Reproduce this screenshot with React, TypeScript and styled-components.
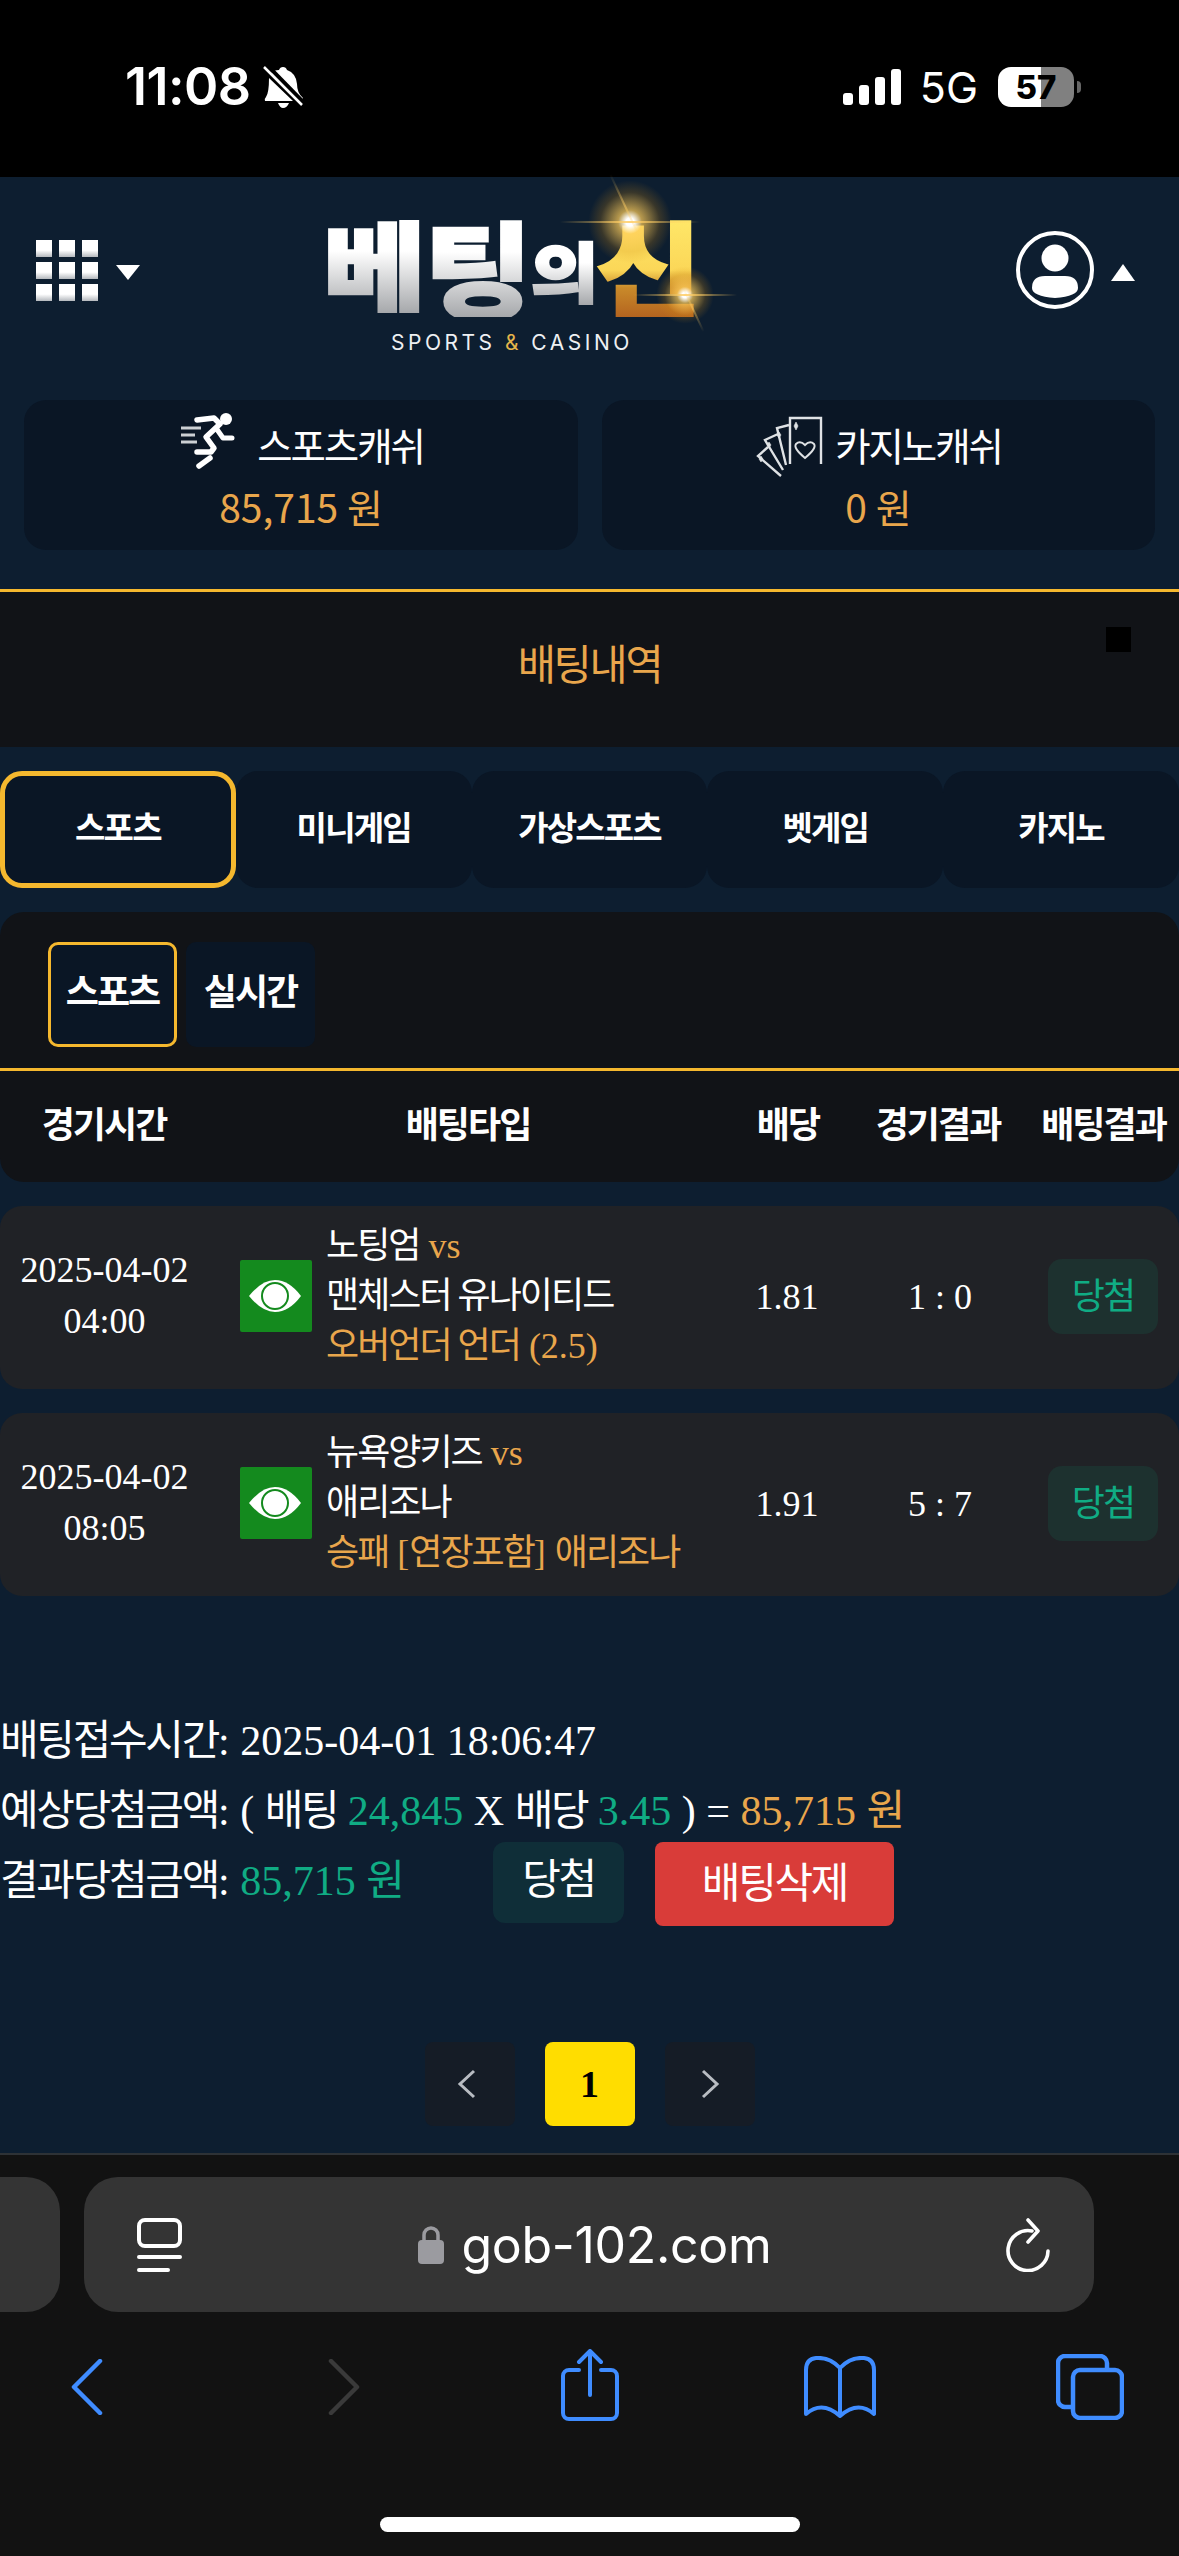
import React from "react";
import styled, { createGlobalStyle } from "styled-components";

const SERIF = `"Liberation Serif", "Noto Sans CJK KR", serif`;
const SANS = `"Noto Sans CJK KR", "Noto Sans", sans-serif`;
const GOLD = "#f5b82e";
const ORANGE = "#e9a64c";
const TEAL = "#10ac84";

const Global = createGlobalStyle`
  html, body { margin: 0; padding: 0; background: #0d1e30; }
  * { box-sizing: border-box; }
  #root { width: 1179px; height: 2556px; overflow: hidden; }
`;

const Page = styled.div`
  width: 1179px;
  height: 2556px;
  display: flex;
  flex-direction: column;
  background: #0d1e30;
  font-family: ${SERIF};
  color: #fff;
  overflow: hidden;
`;

/* Hangul set tighter than the Latin beside it, as in the reference's system font */
const K = styled.span`
  letter-spacing: -0.055em;
`;

const StatusBar = styled.div`
  height: 177px;
  background: #000;
  display: flex;
  justify-content: space-between;
  align-items: flex-start;
  padding: 60px 105px 0 125px;
  font-family: Inter, sans-serif;
`;
const StatusLeft = styled.div`
  display: flex;
  align-items: center;
  gap: 12px;
`;
const Clock = styled.span`
  font-size: 52px;
  line-height: 54px;
  font-weight: 600;
  letter-spacing: -0.5px;
`;
const StatusRight = styled.div`
  display: flex;
  align-items: center;
  gap: 20px;
  height: 54px;
`;
const NetLabel = styled.span`
  font-size: 43px;
  font-weight: 400;
  line-height: 54px;
  margin-left: -1px;
`;
const Battery = styled.div`
  position: relative;
  width: 76px;
  height: 40px;
  border-radius: 13px;
  background: linear-gradient(90deg, #fff 0 57%, #808080 57% 100%);
  display: flex;
  align-items: center;
  justify-content: center;
  font-size: 33px;
  font-weight: 800;
  color: #000;
  &::after {
    content: "";
    position: absolute;
    right: -7px;
    top: 14px;
    width: 4px;
    height: 12px;
    border-radius: 0 4px 4px 0;
    background: #666;
  }
`;

const Header = styled.header`
  height: 223px;
  display: grid;
  grid-template-columns: 291px 1fr auto;
  padding: 0 44px 0 36px;
`;
const MenuBlock = styled.div`
  display: flex;
  align-items: center;
  gap: 18px;
  height: 60px;
  margin-top: 63px;
  align-self: start;
`;
const UserBlock = styled(MenuBlock)`
  gap: 17px;
  height: 80px;
  margin-top: 53px;
`;
const Caret = styled.span<{ $up?: boolean }>`
  width: 0;
  height: 0;
  border-left: 12px solid transparent;
  border-right: 12px solid transparent;
  ${(p) =>
    p.$up ? "border-bottom: 17px solid #fff; margin-top: 4px;" : "border-top: 15px solid #fff; margin-top: 5px;"}
`;
const Tile = styled.div`
  display: grid;
  grid-template-columns: repeat(3, 16px);
  grid-auto-rows: 17px;
  gap: 5px 7px;
`;
const TileDot = styled.i`
  display: block;
  background: linear-gradient(#fff 60%, #b4b8bd);
`;
const LogoBlock = styled.div`
  position: relative;
  width: 373px;
  margin-top: 40px;
  align-self: start;
`;
const WordMark = styled.div`
  display: flex;
  align-items: flex-start;
  height: 113px;
  margin-left: -4px;
  font-family: ${SANS};
  font-weight: 900;
  line-height: 1;
`;
const GlyphSlot = styled.div<{ $w: number }>`
  flex: none;
  width: ${(p) => p.$w}px;
`;
const Glyph = styled.span<{ $size: number; $sx: number; $top: number; $gold?: boolean }>`
  display: block;
  width: ${(p) => p.$size * 0.9}px;
  font-size: ${(p) => p.$size}px;
  letter-spacing: -0.1em;
  margin-top: ${(p) => p.$top}px;
  transform: scaleX(${(p) => p.$sx});
  transform-origin: left top;
  white-space: nowrap;
  -webkit-text-fill-color: transparent;
  -webkit-text-stroke: 2.5px transparent;
  background: ${(p) =>
    p.$gold
      ? "linear-gradient(#ffe96a 0%, #fbd758 55%, #c98a2a 72%, #b4641f 100%)"
      : "linear-gradient(#fff 0%, #fff 38%, #a6a8ab 100%)"};
  -webkit-background-clip: text;
  background-clip: text;
`;
const Glow = styled.i<{ $x: number; $y: number; $s: number }>`
  position: absolute;
  left: ${(p) => p.$x - p.$s / 2}px;
  top: ${(p) => p.$y - p.$s / 2}px;
  width: ${(p) => p.$s}px;
  height: ${(p) => p.$s}px;
  border-radius: 50%;
  background: radial-gradient(circle, #fff 0 7%, rgba(255, 205, 90, 0.7) 20%, rgba(210, 140, 20, 0.22) 50%, transparent 70%);
`;
const Streak = styled.i<{ $x: number; $y: number; $w: number; $rot?: number }>`
  position: absolute;
  left: ${(p) => p.$x - p.$w / 2}px;
  top: ${(p) => p.$y - 1}px;
  width: ${(p) => p.$w}px;
  height: 2px;
  transform: rotate(${(p) => p.$rot ?? 0}deg);
  background: linear-gradient(90deg, transparent, rgba(255, 205, 100, ${(p) => (p.$rot ? 0.5 : 0.85)}), transparent);
`;
const Tagline = styled.div`
  width: 240px;
  margin: 1px 0 0 64px;
  font-family: Inter, sans-serif;
  font-size: 21px;
  line-height: 24px;
  letter-spacing: 3.5px;
  white-space: nowrap;
  color: #eef0f3;
  span { color: #e3b44a; }
`;

const CashRow = styled.div`
  display: grid;
  grid-template-columns: 554px 553px;
  gap: 24px;
  padding: 0 24px;
  height: 150px;
`;
const CashCard = styled.div`
  background: #0a1625;
  border-radius: 22px;
  display: flex;
  flex-direction: column;
  align-items: center;
  padding-top: 14px;
`;
const CashLabel = styled.div`
  display: flex;
  align-items: center;
  gap: 4px;
  height: 60px;
  font-family: ${SANS};
  font-size: 38.5px;
  font-weight: 400;
  letter-spacing: -0.055em;
`;
const CashValue = styled.div`
  font-family: ${SANS};
  font-size: 39px;
  line-height: 46px;
  margin-top: 9px;
  color: ${ORANGE};
  font-weight: 400;
`;

const TitleBand = styled.div`
  position: relative;
  margin-top: 39px;
  border-top: 3px solid ${GOLD};
  height: 158px;
  background: #111317;
  display: flex;
  justify-content: center;
  padding-top: 44px;
  font-family: ${SANS};
  font-size: 41.5px;
  letter-spacing: -0.055em;
  line-height: 52px;
  color: ${ORANGE};
`;
const BlackSquare = styled.i`
  position: absolute;
  left: 1106px;
  top: 35px;
  width: 25px;
  height: 25px;
  background: #000;
`;

const Tabs = styled.div`
  display: grid;
  grid-template-columns: repeat(5, 1fr);
  margin-top: 24px;
  height: 117px;
`;
const Tab = styled.div<{ $active?: boolean }>`
  background: #0a1625;
  border-radius: 22px;
  border: ${(p) => (p.$active ? `5px solid ${GOLD}` : "5px solid transparent")};
  text-align: center;
  padding-top: 28px;
  font-family: ${SANS};
  font-size: 33px;
  letter-spacing: -0.055em;
  line-height: 44px;
  font-weight: 700;
`;

const Panel = styled.section`
  margin-top: 24px;
  height: 270px;
  background: #111317;
  border-radius: 24px;
  display: flex;
  flex-direction: column;
`;
const SubTabs = styled.div`
  display: flex;
  gap: 9px;
  padding: 30px 48px 21px;
  border-bottom: 3px solid ${GOLD};
  height: 159px;
`;
const SubTab = styled.div<{ $active?: boolean }>`
  width: 129px;
  height: 105px;
  border-radius: 10px;
  background: #0a1625;
  border: ${(p) => (p.$active ? `3px solid ${GOLD}` : "3px solid transparent")};
  text-align: center;
  padding-top: 21px;
  font-family: ${SANS};
  font-size: 36px;
  letter-spacing: -0.055em;
  line-height: 46px;
  font-weight: 700;
`;
const HeadRow = styled.div`
  display: grid;
  grid-template-columns: 208px 520px 120px 180px 151px;
  padding-top: 27px;
  text-align: center;
  font-family: ${SANS};
  font-size: 36px;
  letter-spacing: -0.055em;
  line-height: 48px;
  font-weight: 700;
`;

const BetList = styled.div`
  display: flex;
  flex-direction: column;
  gap: 24px;
  margin-top: 24px;
`;
const BetRow = styled.div`
  height: 183px;
  background: #202226;
  border-radius: 22px;
  display: grid;
  grid-template-columns: 240px 86px 395px 130px 176px 131px;
  align-items: center;
  font-size: 36px;
`;
const DateCell = styled.div`
  width: 209px;
  text-align: center;
  line-height: 51px;
  margin-top: -4px;
`;
const TeamCell = styled.div`
  display: flex;
  flex-direction: column;
  line-height: 50px;
  white-space: nowrap;
  margin-top: -3px;
`;
const Vs = styled.span`
  color: ${ORANGE};
`;
const Pick = styled.div`
  color: ${ORANGE};
`;
const CenterCell = styled.div`
  text-align: center;
  padding-left: 2px;
  margin-top: -2px;
`;
const Badge = styled.div`
  height: 75px;
  width: 110px;
  margin: -3px 0 0 21px;
  border-radius: 14px;
  background: #1d312f;
  color: ${TEAL};
  font-family: ${SANS};
  font-size: 36px;
  letter-spacing: -0.055em;
  line-height: 68px;
  text-align: center;
`;

const Info = styled.div`
  margin-top: 110px;
  font-size: 42px;
  line-height: 70px;
  white-space: nowrap;
`;
const InfoLine = styled.div`
  height: 70px;
`;
const Green = styled.span`
  color: ${TEAL};
`;
const Orange = styled.span`
  color: ${ORANGE};
`;
const ResultLine = styled.div`
  display: flex;
  align-items: flex-start;
  height: 84px;
  margin-top: -4px;
`;
const ResultText = styled.div`
  width: 493px;
  line-height: 78px;
`;
const StatusButton = styled.div`
  width: 131px;
  height: 81px;
  border-radius: 12px;
  background: #0f2e38;
  text-align: center;
  font-family: ${SANS};
  font-size: 42px;
  letter-spacing: -0.055em;
  line-height: 68px;
`;
const DeleteButton = styled.div`
  width: 239px;
  height: 84px;
  margin-left: 31px;
  border-radius: 8px;
  background: #d93c39;
  text-align: center;
  font-family: ${SANS};
  font-size: 42px;
  letter-spacing: -0.055em;
  line-height: 76px;
`;

const Pager = styled.div`
  display: flex;
  justify-content: center;
  gap: 30px;
  margin-top: 116px;
`;
const PageBtn = styled.div<{ $current?: boolean }>`
  width: 90px;
  height: 84px;
  border-radius: 8px;
  display: flex;
  align-items: center;
  justify-content: center;
  background: ${(p) => (p.$current ? "#ffdd00" : "#151c26")};
  color: #000;
  font-size: 38px;
  font-weight: 700;
`;

const Chrome = styled.div`
  margin-top: 27px;
  flex: 1;
  background: #121212;
  border-top: 2px solid #2e3236;
  padding-top: 22px;
  position: relative;
`;
const UrlRow = styled.div`
  display: flex;
  gap: 24px;
  height: 135px;
  margin-left: -40px;
`;
const PrevTab = styled.div`
  width: 100px;
  background: #343434;
  border-radius: 34px;
`;
const UrlBar = styled.div`
  width: 1010px;
  background: #343434;
  border-radius: 34px;
  display: flex;
  align-items: center;
  justify-content: space-between;
  padding: 0 42px 0 53px;
`;
const Address = styled.div`
  display: flex;
  align-items: center;
  gap: 17px;
  margin-left: 2px;
  font-family: Inter, "Liberation Sans", sans-serif;
  font-size: 50px;
  letter-spacing: -0.3px;
`;
const ToolBar = styled.div`
  display: grid;
  grid-template-columns: repeat(5, 250px);
  justify-content: center;
  justify-items: center;
  align-items: center;
  margin-top: 33px;
  height: 84px;
`;
const HomeBar = styled.div`
  position: absolute;
  left: 380px;
  bottom: 24px;
  width: 420px;
  height: 15px;
  border-radius: 8px;
  background: #fff;
`;

const Row: React.FC<{ date: string; time: string; home: string; away: string; pick: React.ReactNode; odds: string; score: string }> = (p) => (
  <BetRow>
    <DateCell>
      {p.date}
      <br />
      {p.time}
    </DateCell>
    <EyeIcon />
    <TeamCell>
      <div>
        <K>{p.home}</K> <Vs>vs</Vs>
      </div>
      <div>
        <K>{p.away}</K>
      </div>
      <Pick>{p.pick}</Pick>
    </TeamCell>
    <CenterCell>{p.odds}</CenterCell>
    <CenterCell>{p.score}</CenterCell>
    <Badge>당첨</Badge>
  </BetRow>
);

function EyeIcon() {
  return (
    <svg width="72" height="72" viewBox="0 0 72 72" style={{ marginTop: -4 }}>
      <rect width="72" height="72" rx="2" fill="#148a1e" />
      <path d="M9 36 Q22 20 35 20 Q49 20 61 36 Q49 52 35 52 Q22 52 9 36Z" fill="#fff" />
      <circle cx="35" cy="36" r="13" fill="none" stroke="#148a1e" strokeWidth="2" />
      <circle cx="35" cy="36" r="9" fill="#fff" />
    </svg>
  );
}
function BellOff() {
  return (
    <svg width="42" height="44" viewBox="0 0 42 44">
      <path d="M20 2 Q23 2 24 5 Q33 8 34 19 Q34 28 40 33 L38 36 L8 8 Q11 5 16 5 Q17 2 20 2Z M6 13 L30 36 L2 36 Q1 34 3 32 Q6 28 6 13Z M15 38 H26 Q24 43 20 43 Q17 43 15 38Z" fill="#fff" />
      <path d="M1 1 L40 41" stroke="#000" strokeWidth="4" transform="translate(3 -1)" />
      <path d="M1 2 L39 40" stroke="#fff" strokeWidth="2.5" />
    </svg>
  );
}
function Signal() {
  return (
    <svg width="58" height="36" viewBox="0 0 58 36" fill="#fff" style={{ marginLeft: 3 }}>
      <rect x="0" y="24" width="10" height="12" rx="3" />
      <rect x="16" y="16" width="10" height="20" rx="3" />
      <rect x="32" y="8" width="10" height="28" rx="3" />
      <rect x="48" y="0" width="10" height="36" rx="3" />
    </svg>
  );
}
function Runner() {
  return (
    <svg width="75" height="80" viewBox="0 0 75 80" fill="none" stroke="#fff" strokeLinecap="round" strokeLinejoin="round">
      <circle cx="48" cy="15" r="6" fill="#fff" stroke="none" />
      <path d="M3 24H23M3 31H17M3 38H19" strokeWidth="3" strokeLinecap="butt" stroke="#ccd0d4" />
      <path d="M19 16L36 14L42 20L28 33L36 44L33 48H19" strokeWidth="5.5" />
      <path d="M38 24L45 34H54" strokeWidth="5" />
      <path d="M32 54L21 62" strokeWidth="5.5" />
    </svg>
  );
}
function Cards() {
  return (
    <svg width="78" height="80" viewBox="0 0 78 80" fill="none" stroke="#dfe2e5" strokeWidth="2.4" style={{ marginRight: 2, marginLeft: -4 }}>
      <path d="M39 60V14H70V60" />
      <path d="M38 21L26 24L35 61" />
      <path d="M27 30L14 36L32 66" />
      <path d="M17 43L7 52L30 72" />
      <path d="M54 39Q59 34 63 38Q66 42 54 52Q42 42 45 38Q49 34 54 39Z" transform="translate(0 2)" strokeWidth="2" />
      <path d="M45 18l2 4-2 4-2-4Z M28 28l2 3-2 3-2-3Z M18 38l2 3-2 3-2-3Z M10 52l2 3-2 3-2-3Z" fill="#dfe2e5" strokeWidth="0.6" />
    </svg>
  );
}
function Avatar() {
  return (
    <svg width="78" height="80" viewBox="0 0 78 80">
      <circle cx="39" cy="40" r="37" fill="none" stroke="#fff" strokeWidth="4" />
      <circle cx="39" cy="28" r="13.5" fill="#fff" />
      <path d="M16 58Q16 46 29 46H49Q62 46 62 58Q62 66 39 68Q16 66 16 58Z" fill="#fff" />
    </svg>
  );
}
function PageChevron({ dir }: { dir: "l" | "r" }) {
  return (
    <svg width="20" height="30" viewBox="0 0 20 30" fill="none" stroke="#b8bcc2" strokeWidth="3" style={{ marginLeft: dir === "l" ? -6 : 0 }}>
      <path d={dir === "l" ? "M17 2L3 15L17 28" : "M3 2L17 15L3 28"} />
    </svg>
  );
}
function ReaderIcon() {
  return (
    <svg width="45" height="54" viewBox="0 0 45 54" fill="none" stroke="#fff" strokeWidth="4" strokeLinecap="round">
      <rect x="2" y="2" width="41" height="26" rx="6" />
      <path d="M2 39H43M2 52H31" />
    </svg>
  );
}
function LockIcon() {
  return (
    <svg width="26" height="38" viewBox="0 0 26 38" fill="#9b9ba0">
      <path d="M6 16V9a7 7 0 0 1 14 0v7" fill="none" stroke="#9b9ba0" strokeWidth="3.5" />
      <rect x="0" y="14" width="26" height="24" rx="4" />
    </svg>
  );
}
function ReloadIcon() {
  return (
    <svg width="46" height="54" viewBox="0 0 46 54" fill="none" stroke="#fff" strokeWidth="3.6" strokeLinecap="round" strokeLinejoin="round">
      <path d="M27 12A20 20 0 1 0 43 32" transform="translate(-1 1)" />
      <path d="M22 2L32 13L22 24" />
    </svg>
  );
}
function ToolIcon({ kind }: { kind: "back" | "forward" | "share" | "book" | "tabs" }) {
  const blue = "#3f8cff";
  if (kind === "back")
    return (
      <svg width="60" height="56" viewBox="0 0 60 56" fill="none" stroke={blue} strokeWidth="4.5" strokeLinecap="round" strokeLinejoin="round">
        <path d="M40 2L14 28L40 54" />
      </svg>
    );
  if (kind === "forward")
    return (
      <svg width="60" height="56" viewBox="0 0 60 56" fill="none" stroke="#3a3a3a" strokeWidth="4.5" strokeLinecap="round" strokeLinejoin="round">
        <path d="M21 2L47 28L21 54" />
      </svg>
    );
  if (kind === "share")
    return (
      <svg width="60" height="72" viewBox="0 0 60 72" fill="none" stroke={blue} strokeWidth="4" strokeLinecap="round" strokeLinejoin="round" style={{ marginTop: -4 }}>
        <path d="M19 21H9a6 6 0 0 0-6 6V64a6 6 0 0 0 6 6H51a6 6 0 0 0 6-6V27a6 6 0 0 0-6-6H41" />
        <path d="M30 46V2M19 13L30 2L41 13" />
      </svg>
    );
  if (kind === "book")
    return (
      <svg width="72" height="62" viewBox="0 0 72 62" fill="none" stroke={blue} strokeWidth="4" strokeLinejoin="round">
        <path d="M36 12Q26 1 12 2Q2 3 2 14V58Q18 44 36 60Q54 44 70 58V14Q70 3 60 2Q46 1 36 12V60" />
      </svg>
    );
  return (
    <svg width="68" height="66" viewBox="0 0 68 66" fill="none" stroke={blue} strokeWidth="4.5" strokeLinejoin="round">
      <path d="M17 53H9a7 7 0 0 1-7-7V9a7 7 0 0 1 7-7H44a7 7 0 0 1 7 7v7" />
      <rect x="17" y="16" width="49" height="48" rx="7" />
    </svg>
  );
}

export default function App() {
  return (
    <Page>
      <Global />
      <StatusBar>
        <StatusLeft>
          <Clock>11:08</Clock>
          <BellOff />
        </StatusLeft>
        <StatusRight>
          <Signal />
          <NetLabel>5G</NetLabel>
          <Battery>57</Battery>
        </StatusRight>
      </StatusBar>

      <Header>
        <MenuBlock>
          <Tile>
            {Array.from({ length: 9 }, (_, i) => (
              <TileDot key={i} />
            ))}
          </Tile>
          <Caret />
        </MenuBlock>
        <LogoBlock>
          <WordMark>
            <GlyphSlot $w={101}>
              <Glyph $size={100} $sx={1.12} $top={-4}>베</Glyph>
            </GlyphSlot>
            <GlyphSlot $w={107}>
              <Glyph $size={105} $sx={1.12} $top={-5}>팅</Glyph>
            </GlyphSlot>
            <GlyphSlot $w={65}>
              <Glyph $size={68} $sx={1.08} $top={20}>의</Glyph>
            </GlyphSlot>
            <GlyphSlot $w={100}>
              <Glyph $size={104} $sx={1.1} $top={-4} $gold>신</Glyph>
            </GlyphSlot>
          </WordMark>
          <Tagline>
            SPORTS <span>&amp;</span> CASINO
          </Tagline>
          <Glow $x={303} $y={5} $s={84} />
          <Glow $x={358} $y={78} $s={58} />
          <Streak $x={303} $y={5} $w={140} />
          <Streak $x={358} $y={78} $w={104} />
          <Streak $x={298} $y={-11} $w={70} $rot={65} />
          <Streak $x={366} $y={92} $w={50} $rot={65} />
        </LogoBlock>
        <UserBlock>
          <Avatar />
          <Caret $up />
        </UserBlock>
      </Header>

      <CashRow>
        <CashCard>
          <CashLabel>
            <Runner />
            스포츠캐쉬
          </CashLabel>
          <CashValue>85,715 원</CashValue>
        </CashCard>
        <CashCard>
          <CashLabel>
            <Cards />
            카지노캐쉬
          </CashLabel>
          <CashValue>0 원</CashValue>
        </CashCard>
      </CashRow>

      <TitleBand>
        배팅내역
        <BlackSquare />
      </TitleBand>

      <Tabs>
        <Tab $active>스포츠</Tab>
        <Tab>미니게임</Tab>
        <Tab>가상스포츠</Tab>
        <Tab>벳게임</Tab>
        <Tab>카지노</Tab>
      </Tabs>

      <Panel>
        <SubTabs>
          <SubTab $active>스포츠</SubTab>
          <SubTab>실시간</SubTab>
        </SubTabs>
        <HeadRow>
          <div>경기시간</div>
          <div>배팅타입</div>
          <div>배당</div>
          <div>경기결과</div>
          <div>배팅결과</div>
        </HeadRow>
      </Panel>

      <BetList>
        <Row
          date="2025-04-02"
          time="04:00"
          home="노팅엄"
          away="맨체스터 유나이티드"
          pick={
            <>
              <K>오버언더 언더</K> (2.5)
            </>
          }
          odds="1.81"
          score="1 : 0"
        />
        <Row
          date="2025-04-02"
          time="08:05"
          home="뉴욕양키즈"
          away="애리조나"
          pick={
            <>
              <K>승패</K> [<K>연장포함</K>] <K>애리조나</K>
            </>
          }
          odds="1.91"
          score="5 : 7"
        />
      </BetList>

      <Info>
        <InfoLine>
          <K>배팅접수시간</K>: 2025-04-01 18:06:47
        </InfoLine>
        <InfoLine>
          <K>예상당첨금액</K>: ( <K>배팅</K> <Green>24,845</Green> X <K>배당</K> <Green>3.45</Green> ) ={" "}
          <Orange>
            85,715 <K>원</K>
          </Orange>
        </InfoLine>
        <ResultLine>
          <ResultText>
            <K>결과당첨금액</K>:{" "}
            <Green>
              85,715 <K>원</K>
            </Green>
          </ResultText>
          <StatusButton>당첨</StatusButton>
          <DeleteButton>배팅삭제</DeleteButton>
        </ResultLine>
      </Info>

      <Pager>
        <PageBtn>
          <PageChevron dir="l" />
        </PageBtn>
        <PageBtn $current>1</PageBtn>
        <PageBtn>
          <PageChevron dir="r" />
        </PageBtn>
      </Pager>

      <Chrome>
        <UrlRow>
          <PrevTab />
          <UrlBar>
            <ReaderIcon />
            <Address>
              <LockIcon />
              gob-102.com
            </Address>
            <ReloadIcon />
          </UrlBar>
        </UrlRow>
        <ToolBar>
          <ToolIcon kind="back" />
          <ToolIcon kind="forward" />
          <ToolIcon kind="share" />
          <ToolIcon kind="book" />
          <ToolIcon kind="tabs" />
        </ToolBar>
        <HomeBar />
      </Chrome>
    </Page>
  );
}
